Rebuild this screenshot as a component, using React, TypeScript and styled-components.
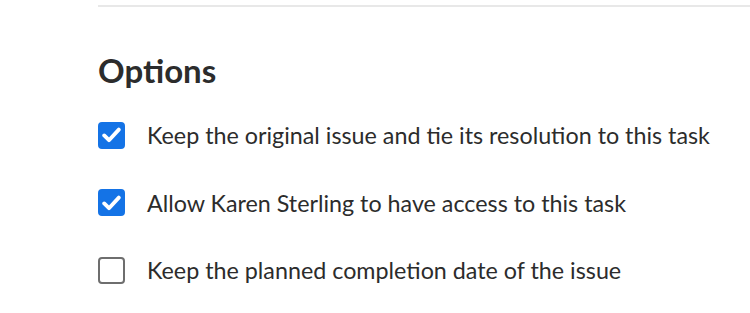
import styled, { createGlobalStyle } from 'styled-components'

const GlobalStyle = createGlobalStyle`
    body {
        margin: 0;
        background: #ffffff;
        font-family: Lato, "Open Sans", sans-serif;
        color: #2c2c2c;
    }
`

const Page = styled.div`
    padding-left: 98px;
    padding-top: 5px;
`

const Divider = styled.hr`
    margin: 0;
    border: none;
    height: 2px;
    background: #e8e8e8;
`

const Section = styled.section`
    padding-top: 43px;
`

const Title = styled.h2`
    margin: 0 0 31px;
    font-size: 33px;
    line-height: 40px;
    font-weight: 700;
    color: #2c2c2c;
`

const OptionList = styled.ul`
    list-style: none;
    margin: 0;
    padding: 0;
    display: flex;
    flex-direction: column;
    gap: 39.5px;
`

const OptionRow = styled.li`
    display: flex;
    align-items: center;
    gap: 22px;
    height: 28px;
`

interface BoxProps {
    checked: boolean
}

const Box = styled.span<BoxProps>`
    box-sizing: border-box;
    width: 27px;
    height: 27px;
    border-radius: 4px;
    display: flex;
    align-items: center;
    justify-content: center;
    flex-shrink: 0;
    background: ${(p) => (p.checked ? '#1473e6' : '#ffffff')};
    border: 2px solid ${(p) => (p.checked ? '#1473e6' : '#6e6e6e')};
`

const Label = styled.span`
    font-size: 23.3px;
    line-height: 28px;
    color: #2c2c2c;
`

const options = [
    { label: 'Keep the original issue and tie its resolution to this task', checked: true },
    { label: 'Allow Karen Sterling to have access to this task', checked: true },
    { label: 'Keep the planned completion date of the issue', checked: false },
]

const App = () => {
    return (
        <Page>
            <GlobalStyle />
            <Divider />

            <Section>
                <Title>Options</Title>

                <OptionList>
                    {options.map((option, index) => (
                        <OptionRow key={index}>
                            <Box checked={option.checked}>
                                {option.checked && (
                                    <svg width="19" height="16" viewBox="0 0 19 16">
                                        <path
                                            d="M2.2 8.4 L7 13.2 L16.8 2.6"
                                            fill="none"
                                            stroke="#ffffff"
                                            strokeWidth="3.8"
                                            strokeLinecap="round"
                                            strokeLinejoin="round"
                                        />
                                    </svg>
                                )}
                            </Box>
                            <Label>{option.label}</Label>
                        </OptionRow>
                    ))}
                </OptionList>
            </Section>
        </Page>
    )
}

export default App
